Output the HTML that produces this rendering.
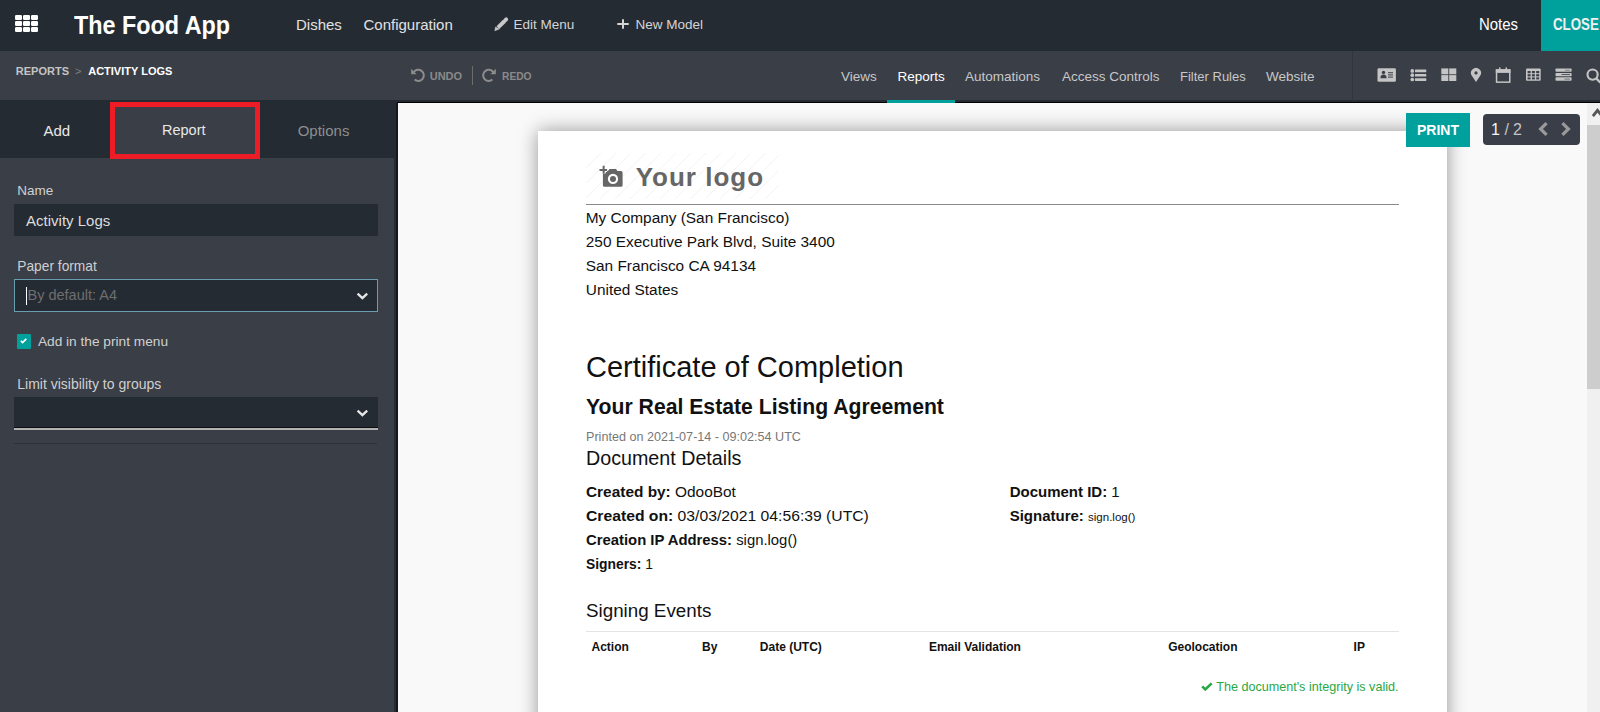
<!DOCTYPE html>
<html><head><meta charset="utf-8"><style>
html,body{margin:0;padding:0;width:1600px;height:712px;overflow:hidden;background:#f9f9f9}
body{position:relative;font-family:"Liberation Sans",sans-serif}
.t{position:absolute;white-space:nowrap;line-height:1}
.r{position:absolute}
b{font-weight:700}
</style></head><body>
<div class="r" style="left:0px;top:0px;width:1600px;height:51px;background:#252b33"></div>
<div class="r" style="left:15px;top:14.9px;width:6.6px;height:5.3px;background:#fff;border-radius:1.2px"></div>
<div class="r" style="left:23.2px;top:14.9px;width:6.6px;height:5.3px;background:#fff;border-radius:1.2px"></div>
<div class="r" style="left:31.4px;top:14.9px;width:6.6px;height:5.3px;background:#fff;border-radius:1.2px"></div>
<div class="r" style="left:15px;top:20.9px;width:6.6px;height:5.3px;background:#fff;border-radius:1.2px"></div>
<div class="r" style="left:23.2px;top:20.9px;width:6.6px;height:5.3px;background:#fff;border-radius:1.2px"></div>
<div class="r" style="left:31.4px;top:20.9px;width:6.6px;height:5.3px;background:#fff;border-radius:1.2px"></div>
<div class="r" style="left:15px;top:27.1px;width:6.6px;height:5.3px;background:#fff;border-radius:1.2px"></div>
<div class="r" style="left:23.2px;top:27.1px;width:6.6px;height:5.3px;background:#fff;border-radius:1.2px"></div>
<div class="r" style="left:31.4px;top:27.1px;width:6.6px;height:5.3px;background:#fff;border-radius:1.2px"></div>
<div class="t " style="left:74px;top:11.69px;font-size:26px;font-weight:700;color:#fff;transform:scaleX(0.898);transform-origin:0 0;">The Food App</div>
<div class="t " style="left:296px;top:17.10px;font-size:15px;font-weight:400;color:#e2e2e2;">Dishes</div>
<div class="t " style="left:363.5px;top:17.10px;font-size:15px;font-weight:400;color:#e2e2e2;">Configuration</div>
<svg class="r" style="left:490px;top:15px" width="20" height="20" viewBox="490 15 20 20"><path d="M497.9 27.7 L504.6 21" stroke="#c8c8c8" stroke-width="3.9"/><path d="M494.8 30.8 L495.5 26.9 L499.3 29.1 Z" fill="#c8c8c8" stroke="#c8c8c8" stroke-width="0.5" stroke-linejoin="round"/><path d="M505.4 20.2 L506.2 19.4" stroke="#c8c8c8" stroke-width="3.9" stroke-linecap="round"/></svg>
<div class="t " style="left:513.5px;top:17.67px;font-size:13.5px;font-weight:400;color:#d4d4d4;">Edit Menu</div>
<div class="r" style="left:617.2px;top:22.6px;width:11.5px;height:2.8px;background:#d4d4d4;border-radius:1px"></div>
<div class="r" style="left:621.5px;top:18.6px;width:2.8px;height:10.8px;background:#d4d4d4;border-radius:1px"></div>
<div class="t " style="left:635.5px;top:17.67px;font-size:13.5px;font-weight:400;color:#d4d4d4;">New Model</div>
<div class="t " style="left:1479px;top:16.86px;font-size:16px;font-weight:400;color:#fff;transform:scaleX(0.935);transform-origin:0 0;">Notes</div>
<div class="r" style="left:1541px;top:0px;width:59px;height:51px;background:#00a09d"></div>
<div class="t " style="left:1552.5px;top:16.86px;font-size:16px;font-weight:700;color:#f0f0f0;transform:scaleX(0.83);transform-origin:0 0;">CLOSE</div>
<div class="r" style="left:0px;top:51px;width:1600px;height:49px;background:#3a3e47"></div>
<div class="r" style="left:0px;top:100px;width:1600px;height:2px;background:#252b33"></div>
<div class="r" style="left:0px;top:101.8px;width:1600px;height:1.3px;background:#000"></div>
<div class="t " style="left:15.8px;top:65.79px;font-size:11px;font-weight:700;color:#c4c4c4;">REPORTS</div>
<div class="t " style="left:75px;top:65.79px;font-size:11px;font-weight:400;color:#808080;">&gt;</div>
<div class="t " style="left:88.2px;top:65.79px;font-size:11px;font-weight:700;color:#ffffff;">ACTIVITY LOGS</div>
<div class="t " style="left:429.7px;top:70.99px;font-size:11px;font-weight:700;color:#8a8a8a;">UNDO</div>
<div class="r" style="left:472px;top:66px;width:1.3px;height:19px;background:#6c6c6c"></div>
<div class="t " style="left:501.9px;top:70.99px;font-size:11px;font-weight:700;color:#8a8a8a;transform:scaleX(0.93);transform-origin:0 0;">REDO</div>
<svg class="r" style="left:410px;top:67px" width="16" height="16" viewBox="0 0 16 16"><path d="M3.6 5.2 A5.6 5.6 0 1 1 4.6 12.6" fill="none" stroke="#8c8c8c" stroke-width="2"/><path d="M1.2 1.8 L1.2 7.2 L6.6 7.2 Z" fill="#8c8c8c"/></svg>
<svg class="r" style="left:481px;top:67px" width="16" height="16" viewBox="0 0 16 16"><path d="M12.4 5.2 A5.6 5.6 0 1 0 11.4 12.6" fill="none" stroke="#8c8c8c" stroke-width="2"/><path d="M14.8 1.8 L14.8 7.2 L9.4 7.2 Z" fill="#8c8c8c"/></svg>
<div class="t " style="left:841px;top:70.07px;font-size:13.5px;font-weight:400;color:#c8c8c8;">Views</div>
<div class="t " style="left:897.5px;top:70.07px;font-size:13.5px;font-weight:400;color:#ffffff;font-weight:500;">Reports</div>
<div class="t " style="left:965px;top:70.07px;font-size:13.5px;font-weight:400;color:#c8c8c8;">Automations</div>
<div class="t " style="left:1062px;top:70.07px;font-size:13.5px;font-weight:400;color:#c8c8c8;">Access Controls</div>
<div class="t " style="left:1179.8px;top:70.07px;font-size:13.5px;font-weight:400;color:#c8c8c8;transform:scaleX(0.963);transform-origin:0 0;">Filter Rules</div>
<div class="t " style="left:1266px;top:70.07px;font-size:13.5px;font-weight:400;color:#c8c8c8;">Website</div>
<div class="r" style="left:887px;top:99.5px;width:68px;height:3.2px;background:#00a09d"></div>
<div class="r" style="left:1351.5px;top:51px;width:1px;height:50px;background:#30343c"></div>
<div class="r" style="left:0px;top:103px;width:397px;height:609px;background:#3a3e47"></div>
<div class="r" style="left:0px;top:100px;width:397px;height:58px;background:#252b33"></div>
<div class="r" style="left:394px;top:158px;width:3px;height:554px;background:#252b33"></div>
<div class="r" style="left:110px;top:102px;width:150px;height:57px;background:#3a3e47;border:5px solid #ee1c25;box-sizing:border-box"></div>
<div class="t " style="left:43.4px;top:122.80px;font-size:15px;font-weight:400;color:#e8e8e8;">Add</div>
<div class="t " style="left:162px;top:123.23px;font-size:14.5px;font-weight:400;color:#e8e8e8;">Report</div>
<div class="t " style="left:297.7px;top:122.80px;font-size:15px;font-weight:400;color:#8e8e8e;">Options</div>
<div class="t " style="left:17.3px;top:183.57px;font-size:13.5px;font-weight:400;color:#d0d0d0;">Name</div>
<div class="r" style="left:14.3px;top:204px;width:363.4px;height:31.7px;background:#252b33"></div>
<div class="t " style="left:26.1px;top:212.80px;font-size:15px;font-weight:400;color:#dcdcdc;">Activity Logs</div>
<div class="t " style="left:17.3px;top:259.66px;font-size:13.75px;font-weight:400;color:#d0d0d0;">Paper format</div>
<div class="r" style="left:14.3px;top:279.3px;width:363.6px;height:32.5px;background:#252b33;border:1.2px solid #6a9db2;box-sizing:border-box"></div>
<div class="r" style="left:26px;top:286.6px;width:1.3px;height:18px;background:#fff"></div>
<div class="t " style="left:27.5px;top:288.23px;font-size:14.5px;font-weight:400;color:#6e6e6e;">By default: A4</div>
<div class="r" style="left:17px;top:334.4px;width:14.1px;height:14.6px;background:#00a09d;border-radius:1px"></div>
<svg class="r" style="left:17px;top:334.4px" width="14" height="14" viewBox="17 334.4 14 14"><path d="M20.9 341.3 L22.6 343 L26.3 339.3" fill="none" stroke="#fff" stroke-width="1.7"/></svg>
<div class="t " style="left:37.9px;top:335.00px;font-size:13.7px;font-weight:400;color:#d0d0d0;">Add in the print menu</div>
<div class="t " style="left:17.3px;top:376.65px;font-size:14px;font-weight:400;color:#d0d0d0;">Limit visibility to groups</div>
<div class="r" style="left:14.3px;top:397.2px;width:363.3px;height:33px;background:#252b33;border-bottom:2px solid #b2b2b2;box-sizing:border-box"></div>
<div class="r" style="left:14.3px;top:427px;width:363.3px;height:1px;background:#0c0e12"></div>
<div class="r" style="left:14.3px;top:442.5px;width:363px;height:1.2px;background:#2c3038"></div>
<svg class="r" style="left:355px;top:289.3px" width="14" height="12" viewBox="0 0 14 12"><path d="M2.6 4.6 L7.4 9.2 L12.2 4.6" fill="none" stroke="#e6e6e6" stroke-width="2.3"/></svg>
<svg class="r" style="left:355px;top:406.4px" width="14" height="12" viewBox="0 0 14 12"><path d="M2.6 4.6 L7.4 9.2 L12.2 4.6" fill="none" stroke="#e6e6e6" stroke-width="2.3"/></svg>
<div class="r" style="left:397px;top:103px;width:1190px;height:609px;background:#f9f9f9"></div>
<div class="r" style="left:396px;top:103px;width:1.5px;height:609px;background:#15181d"></div>
<div class="r" style="left:537.5px;top:131px;width:909.5px;height:700px;background:#fff;box-shadow:0 0 18px rgba(0,0,0,0.4)"></div>
<div class="r" style="left:585.5px;top:152.5px;width:193px;height:46px;background:repeating-linear-gradient(-45deg,#fff 0,#fff 9.6px,#f2f4f3 9.6px,#f2f4f3 10.6px);"></div>
<svg class="r" style="left:595px;top:160px" width="35" height="32" viewBox="0 0 35 32"><path d="M7.9 12.5 Q7.9 11 9.4 11 H13 L14.5 9 H21 L22.5 11 H26.1 Q27.6 11 27.6 12.5 V25.2 Q27.6 26.7 26.1 26.7 H9.4 Q7.9 26.7 7.9 25.2 Z" fill="#666"/><path d="M4.5 10 H12.1 M8.65 5.8 V13.5" stroke="#fff" stroke-width="4.2"/><path d="M4.5 10 H12.1 M8.65 5.8 V13.5" stroke="#666" stroke-width="2"/><circle cx="18" cy="18.9" r="5.15" fill="#fff"/><circle cx="18" cy="18.9" r="3" fill="#666"/></svg>
<div class="t " style="left:635.7px;top:164.49px;font-size:26px;font-weight:700;color:#666;letter-spacing:1px;">Your logo</div>
<div class="r" style="left:585.5px;top:204px;width:813.5px;height:1.2px;background:#8a8a8a"></div>
<div class="t " style="left:585.8px;top:210.06px;font-size:15.4px;font-weight:400;color:#111;">My Company (San Francisco)</div>
<div class="t " style="left:585.8px;top:233.91px;font-size:15.4px;font-weight:400;color:#111;">250 Executive Park Blvd, Suite 3400</div>
<div class="t " style="left:585.8px;top:257.76px;font-size:15.4px;font-weight:400;color:#111;">San Francisco CA 94134</div>
<div class="t " style="left:585.8px;top:281.61px;font-size:15.4px;font-weight:400;color:#111;">United States</div>
<div class="t " style="left:586px;top:352.95px;font-size:29px;font-weight:400;color:#111;">Certificate of Completion</div>
<div class="t " style="left:586px;top:396.30px;font-size:21.2px;font-weight:700;color:#111;">Your Real Estate Listing Agreement</div>
<div class="t " style="left:586px;top:431.33px;font-size:12.6px;font-weight:400;color:#777;">Printed on 2021-07-14 - 09:02:54 UTC</div>
<div class="t " style="left:586px;top:449.07px;font-size:19.7px;font-weight:400;color:#111;">Document Details</div>
<div class="t " style="left:586px;top:484.00px;font-size:15px;font-weight:400;color:#111;transform:scaleX(1.027);transform-origin:0 0;"><b>Created by:</b> OdooBot</div>
<div class="t " style="left:586px;top:507.85px;font-size:15px;font-weight:400;color:#111;transform:scaleX(1.047);transform-origin:0 0;"><b>Created on:</b> 03/03/2021 04:56:39 (UTC)</div>
<div class="t " style="left:586px;top:531.70px;font-size:15px;font-weight:400;color:#111;transform:scaleX(0.99);transform-origin:0 0;"><b>Creation IP Address:</b> sign.log()</div>
<div class="t " style="left:586px;top:555.55px;font-size:15px;font-weight:400;color:#111;transform:scaleX(0.923);transform-origin:0 0;"><b>Signers:</b> 1</div>
<div class="t " style="left:1009.7px;top:484.00px;font-size:15px;font-weight:400;color:#111;"><b>Document ID:</b> 1</div>
<div class="t " style="left:1009.7px;top:507.70px;font-size:15px;font-weight:400;color:#111;"><b>Signature:</b> <span style='font-size:11.5px'>sign.log()</span></div>
<div class="t " style="left:586px;top:601.59px;font-size:18.8px;font-weight:400;color:#111;">Signing Events</div>
<div class="r" style="left:586px;top:631px;width:813px;height:1px;background:#e4e4e4"></div>
<div class="t " style="left:591.5px;top:640.84px;font-size:12px;font-weight:700;color:#111;">Action</div>
<div class="t " style="left:702px;top:640.84px;font-size:12px;font-weight:700;color:#111;">By</div>
<div class="t " style="left:759.8px;top:640.84px;font-size:12px;font-weight:700;color:#111;">Date (UTC)</div>
<div class="t " style="left:928.9px;top:640.84px;font-size:12px;font-weight:700;color:#111;">Email Validation</div>
<div class="t " style="left:1168.2px;top:640.84px;font-size:12px;font-weight:700;color:#111;">Geolocation</div>
<div class="t " style="left:1353.6px;top:640.84px;font-size:12px;font-weight:700;color:#111;">IP</div>
<svg class="r" style="left:1201px;top:681px" width="12" height="10" viewBox="0 0 12 10"><path d="M1.2 5.4 L4.3 8.4 L10.6 2.4" fill="none" stroke="#28a745" stroke-width="2.6"/></svg>
<div class="t " style="left:1216.2px;top:681.33px;font-size:12.6px;font-weight:400;color:#28a745;">The document's integrity is valid.</div>
<div class="r" style="left:1405.5px;top:112.5px;width:64.5px;height:34px;background:#00a09d"></div>
<div class="t " style="left:1417px;top:123.15px;font-size:14px;font-weight:700;color:#fff;">PRINT</div>
<div class="r" style="left:1483px;top:114.3px;width:97px;height:30.3px;background:#3a3e48;border-radius:4px"></div>
<div class="t " style="left:1491px;top:121.76px;font-size:16px;font-weight:400;color:#f4f4f4;">1</div>
<div class="t " style="left:1504.6px;top:121.76px;font-size:16px;font-weight:400;color:#c4c4c4;">/</div>
<div class="t " style="left:1513px;top:121.76px;font-size:16px;font-weight:400;color:#c4c4c4;">2</div>
<svg class="r" style="left:1536px;top:120px" width="15" height="18" viewBox="0 0 15 18"><path d="M10.6 3.2 L4.6 9 L10.6 14.8" fill="none" stroke="#9a9a9a" stroke-width="3.2"/></svg>
<svg class="r" style="left:1558px;top:120px" width="15" height="18" viewBox="0 0 15 18"><path d="M4.4 3.2 L10.4 9 L4.4 14.8" fill="none" stroke="#9a9a9a" stroke-width="3.2"/></svg>
<div class="r" style="left:1587px;top:103px;width:13px;height:609px;background:#f0f0f0"></div>
<div class="r" style="left:1587px;top:125px;width:13px;height:264px;background:#cdcdcd"></div>
<svg class="r" style="left:1587px;top:104px" width="13" height="16" viewBox="0 0 13 16"><path d="M5.9 12.2 L10.5 6.3 L15.1 12.2" fill="none" stroke="#555" stroke-width="2.8"/></svg>
<svg class="r" style="left:1370px;top:60px" width="230" height="30" viewBox="1370 60 230 30">
<rect x="1377.5" y="68.3" width="18.4" height="13.4" rx="1.3" fill="#c4c4c4"/>
<circle cx="1383.5" cy="72.4" r="1.7" fill="#3a3e47"/>
<path d="M1380.4 78.2 Q1380.4 74.6 1383.5 74.6 Q1386.6 74.6 1386.6 78.2 Z" fill="#3a3e47"/>
<rect x="1388" y="72.2" width="5" height="1" fill="#3a3e47"/><rect x="1388" y="74.4" width="5" height="1" fill="#3a3e47"/><rect x="1388" y="76.6" width="5" height="1" fill="#3a3e47"/>
<circle cx="1412.3" cy="70.9" r="1.85" fill="#c4c4c4"/><circle cx="1412.3" cy="75.2" r="1.85" fill="#c4c4c4"/><circle cx="1412.3" cy="79.5" r="1.85" fill="#c4c4c4"/>
<rect x="1415" y="69.6" width="11.3" height="2.7" rx="0.4" fill="#c4c4c4"/><rect x="1415" y="73.9" width="11.3" height="2.7" rx="0.4" fill="#c4c4c4"/><rect x="1415" y="78.2" width="11.3" height="2.7" rx="0.4" fill="#c4c4c4"/>
<rect x="1441.3" y="68.4" width="7" height="5.9" fill="#c4c4c4"/><rect x="1449.2" y="68.4" width="7.1" height="5.9" fill="#c4c4c4"/><rect x="1441.3" y="75.1" width="7" height="5.9" fill="#c4c4c4"/><rect x="1449.2" y="75.1" width="7.1" height="5.9" fill="#c4c4c4"/>
<path d="M1476 81.9 L1472 76 A5 5 0 1 1 1480 76 Z" fill="#c4c4c4"/><circle cx="1476" cy="72.9" r="1.6" fill="#3a3e47"/>
<rect x="1496.55" y="70" width="13.2" height="12.15" fill="none" stroke="#c4c4c4" stroke-width="1.5"/><rect x="1495.8" y="69.3" width="14.7" height="3.6" fill="#c4c4c4"/>
<rect x="1499" y="67.2" width="1.5" height="3.5" rx="0.6" fill="#c4c4c4"/><rect x="1505.5" y="67.2" width="1.5" height="3.5" rx="0.6" fill="#c4c4c4"/>
<rect x="1526" y="68.5" width="14.7" height="12.3" rx="1" fill="#c4c4c4"/>
<g fill="#3a3e47"><rect x="1527.6" y="71" width="3" height="2.2"/><rect x="1531.9" y="71" width="3" height="2.2"/><rect x="1536.2" y="71" width="3" height="2.2"/><rect x="1527.6" y="74.2" width="3" height="2.2"/><rect x="1531.9" y="74.2" width="3" height="2.2"/><rect x="1536.2" y="74.2" width="3" height="2.2"/><rect x="1527.6" y="77.4" width="3" height="2"/><rect x="1531.9" y="77.4" width="3" height="2"/><rect x="1536.2" y="77.4" width="3" height="2"/></g>
<rect x="1555.5" y="68.5" width="16.1" height="3.3" rx="0.8" fill="#c4c4c4"/><rect x="1555.5" y="72.9" width="16.1" height="3.3" rx="0.8" fill="#c4c4c4"/><rect x="1555.5" y="77.3" width="16.1" height="3.5" rx="0.8" fill="#c4c4c4"/>
<rect x="1565" y="69.8" width="5" height="0.8" fill="#3a3e47" opacity="0.6"/><rect x="1561.5" y="74.2" width="8.5" height="0.8" fill="#3a3e47"/><rect x="1564.5" y="78.6" width="5.5" height="1" fill="#3a3e47" opacity="0.6"/>
<circle cx="1592.6" cy="74.6" r="5.1" fill="none" stroke="#c4c4c4" stroke-width="2.1"/><path d="M1596.2 78.3 L1600.5 82.6" stroke="#c4c4c4" stroke-width="2.4"/>
</svg>
</body></html>
